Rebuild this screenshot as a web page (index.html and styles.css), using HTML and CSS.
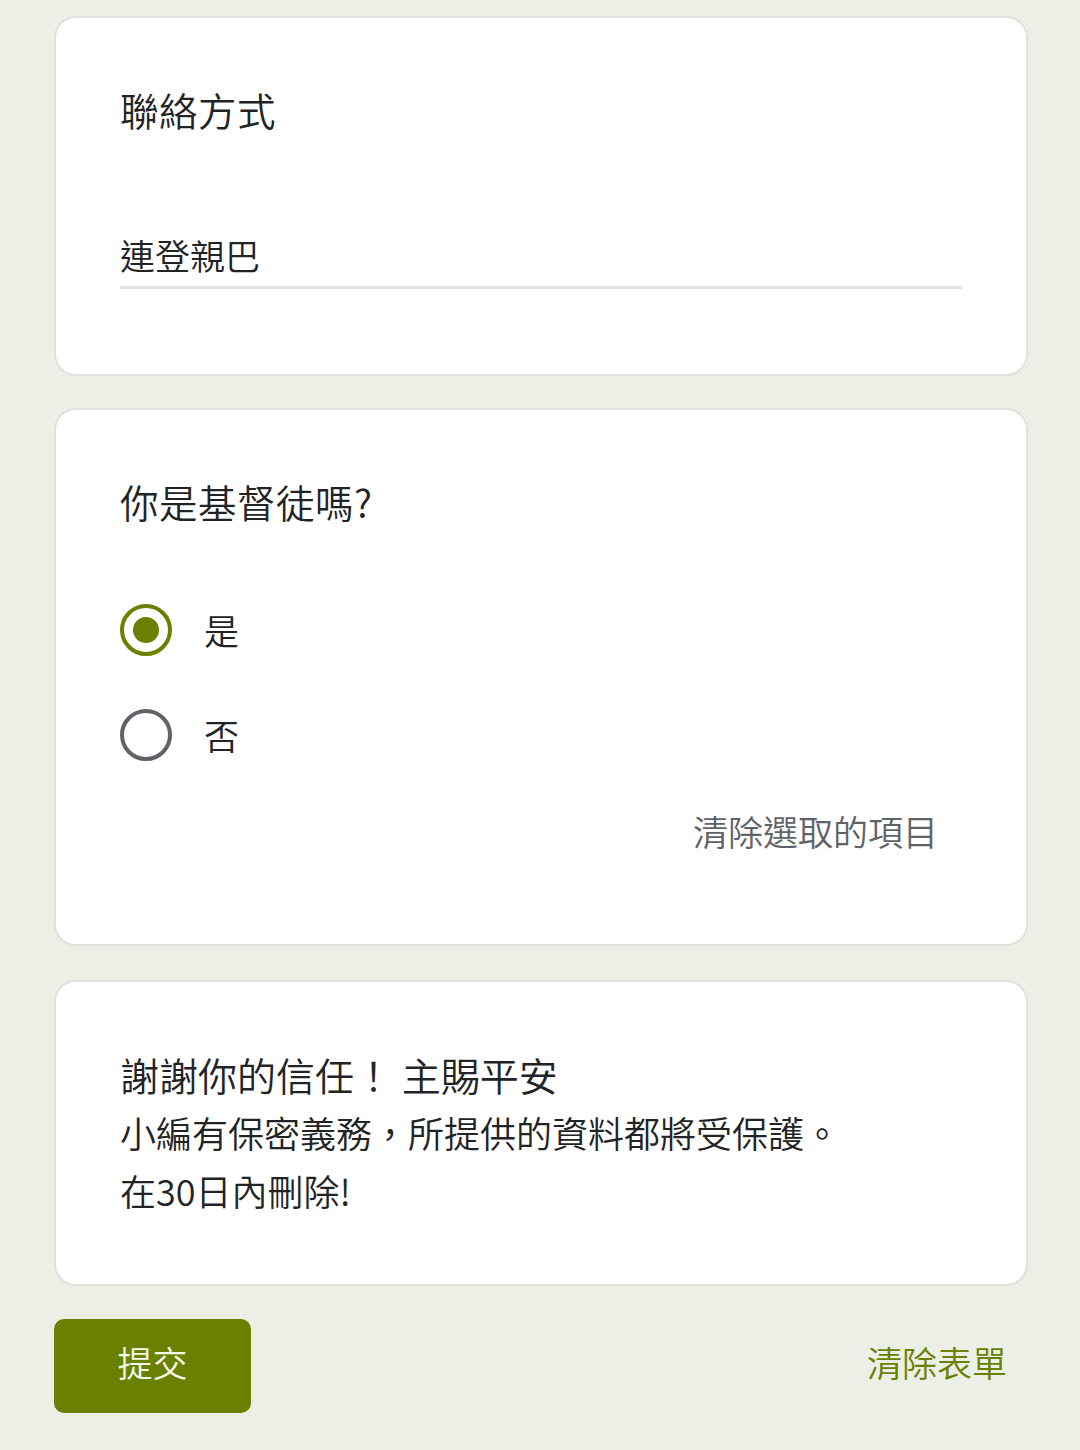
FILE: index.html
```html
<!DOCTYPE html>
<html lang="zh-Hant">
<head>
<meta charset="utf-8">
<link rel="stylesheet" href="styles.css">
</head>
<body>
<main class="form">
  <section class="card card-contact">
    <div class="q-title">聯絡方式</div>
    <div class="answer">連登親巴</div>
    <div class="underline"></div>
  </section>

  <section class="card card-radio">
    <div class="q-title">你是基督徒嗎?</div>
    <div class="options">
      <div class="option">
        <span class="radio checked"><span class="dot"></span></span>
        <span class="opt-label">是</span>
      </div>
      <div class="option">
        <span class="radio"></span>
        <span class="opt-label">否</span>
      </div>
    </div>
    <div class="clear-sel">清除選取的項目</div>
  </section>

  <section class="card card-note">
    <p class="note note-title">謝謝你的信任！ 主賜平安</p>
    <p class="note">小編有保密義務，所提供的資料都將受保護。</p>
    <p class="note">在30日內刪除!</p>
  </section>

  <div class="actions">
    <button class="submit">提交</button>
    <span class="clear-form">清除表單</span>
  </div>
</main>
</body>
</html>
```

FILE: styles.css
```css
* { box-sizing: border-box; }
html, body {
  margin: 0;
  padding: 0;
  background: #ebefe6;
}
body {
  font-family: "Noto Sans CJK TC", "Noto Sans", Roboto, sans-serif;
  font-weight: 350;
  color: #222325;
  width: 1080px;
  height: 1450px;
  overflow: hidden;
}
.form {
  padding: 16px 52px 0 54px;
  display: flex;
  flex-direction: column;
}
.card {
  background: #ffffff;
  border: 2px solid #dfe2dc;
  border-radius: 22px;
  padding: 0 64px;
}
.card-radio { margin-top: 32px; }
.card-note { margin-top: 34px; }

.q-title {
  font-size: 38.5px;
  line-height: 48px;
  padding-top: 67px;
  letter-spacing: 0.5px;
}
.card-contact { height: 360px; }
.answer {
  margin-top: 98px;
  font-size: 35px;
  line-height: 48px;
  padding-bottom: 7px;
}
.underline {
  height: 3px;
  background: #e3e3e3;
}

.card-radio {
  height: 538px;
  display: flex;
  flex-direction: column;
}
.options {
  margin-top: 79px;
  display: flex;
  flex-direction: column;
  gap: 53px;
}
.option {
  display: flex;
  align-items: center;
  height: 52px;
}
.radio {
  width: 52px;
  height: 52px;
  border-radius: 50%;
  border: 4.5px solid #5f6368;
  display: flex;
  align-items: center;
  justify-content: center;
  flex: none;
}
.radio.checked { border-color: #6a8100; }
.radio .dot {
  width: 26px;
  height: 26px;
  border-radius: 50%;
  background: #6a8100;
}
.opt-label {
  margin-left: 32px;
  font-size: 35px;
  line-height: 48px;
}
.clear-sel {
  margin-top: 46px;
  align-self: flex-end;
  margin-right: 24px;
  font-size: 35px;
  line-height: 48px;
  color: #5f6368;
}

.card-note {
  height: 306px;
  padding-top: 63px;
}
.note {
  margin: 0;
  font-size: 36px;
  line-height: 58px;
}
.note-title {
  font-size: 39px;
}

.actions {
  margin-top: 33px;
  display: flex;
  align-items: center;
  justify-content: space-between;
  padding-right: 21px;
}
.submit {
  width: 197px;
  height: 94px;
  background: #6a8100;
  color: #f7f9ea;
  border: none;
  border-radius: 10px;
  font-family: inherit;
  font-weight: 350;
  font-size: 35px;
  line-height: 40px;
  padding: 0 0 8px 0;
}
.clear-form {
  font-size: 35px;
  line-height: 40px;
  color: #6a8100;
  margin-bottom: 8px;
}
```
